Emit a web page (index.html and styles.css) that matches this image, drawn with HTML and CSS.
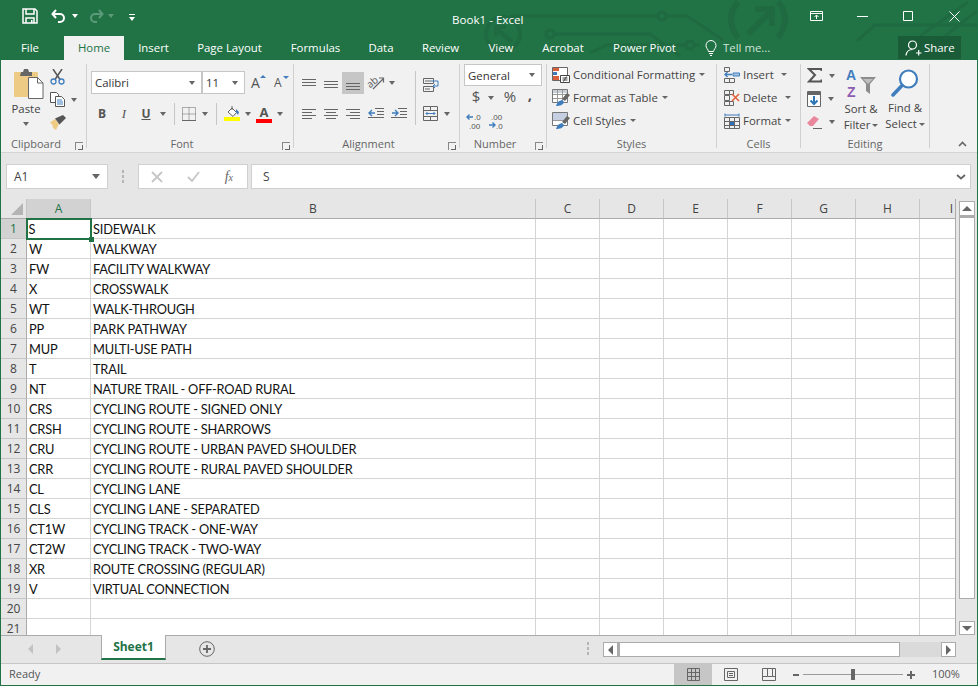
FILE: index.html
```html
<!DOCTYPE html>
<html lang="en">
<head>
<meta charset="utf-8">
<title>Book1 - Excel</title>
<link rel="stylesheet" href="styles.css">
</head>
<body>
<div class="window">
  <header class="titlebar">
    <svg class="circuit" width="978" height="60" viewBox="0 0 978 60" fill="none">
      <g stroke="#1f6a40" stroke-width="3">
        <path d="M510 16H658M666 16H687L723 40"/><circle cx="662" cy="16" r="4"/>
        <path d="M554 34H650L680 56"/><circle cx="550" cy="34" r="4"/>
        <path d="M590 53L607 45H686M694 45H700"/><circle cx="690" cy="45" r="4"/>
        <circle cx="503" cy="34" r="17" stroke-width="4"/><path d="M512 42L496 28M496 36V27H506" stroke-width="4"/>
        <path d="M738 2Q724 18 738 38M778 2Q792 18 778 38" stroke-width="6"/>
        <path d="M748 34L770 12M755 9H772V26" stroke-width="6"/>
        <path d="M857 41L875 25H978M920 36L968 2M940 40L978 10"/>
      </g>
    </svg>
    <div class="top-row">
      <div class="qat">
        <span class="qat-slot first"><svg width="16" height="16" viewBox="0 0 16 16" fill="none" stroke="#fff" stroke-width="1.5"><path d="M1 1h12l2 2v12H1z"/><path d="M4 1v5h8V1M4 15v-5h8v5"/><path d="M9 12h1.5v3H9z" fill="#fff" stroke="none"/></svg></span>
        <span class="qat-slot undo"><svg width="16" height="14" viewBox="0 0 16 14" fill="none" stroke="#fff" stroke-width="2"><path d="M5 1L1.5 5 5 9"/><path d="M2 5h7a4 4 0 0 1 0 8H7"/></svg></span>
        <span class="caret white"></span>
        <span class="qat-slot redo"><svg width="16" height="14" viewBox="0 0 16 14" fill="none" stroke="#5c9a79" stroke-width="2"><path d="M11 1l3.500 4L11 9"/><path d="M14 5H7a4 4 0 0 0 0 8h2"/></svg></span>
        <span class="caret dim"></span>
        <span class="qat-custom"><i></i><span class="caret white"></span></span>
      </div>
      <div class="doc-title">Book1 - Excel</div>
      <div class="win-btns">
        <span class="win-btn"><svg width="13" height="10" viewBox="0 0 13 10" fill="none" stroke="#fff"><path d="M.5.500h12v9H.5zM.5 2.500h12M6.500 8V4M4.500 6l2-2 2 2"/></svg></span>
        <span class="win-btn"><svg width="11" height="1" viewBox="0 0 11 1"><path d="M0 0h11v1H0z" fill="#fff"/></svg></span>
        <span class="win-btn"><svg width="10" height="10" viewBox="0 0 10 10" fill="none" stroke="#fff"><path d="M.5.500h9v9h-9z"/></svg></span>
        <span class="win-btn"><svg width="11" height="11" viewBox="0 0 11 11" fill="none" stroke="#fff"><path d="M.5.500l10 10M10.500.500l-10 10"/></svg></span>
      </div>
    </div>
    <nav class="tabs">
      <span class="tab t-file">File</span>
      <span class="tab t-home">Home</span>
      <span class="tab t-insert">Insert</span>
      <span class="tab t-layout">Page Layout</span>
      <span class="tab t-formulas">Formulas</span>
      <span class="tab t-data">Data</span>
      <span class="tab t-review">Review</span>
      <span class="tab t-view">View</span>
      <span class="tab t-acrobat">Acrobat</span>
      <span class="tab t-pivot">Power Pivot</span>
      <span class="tell">
        <svg width="12" height="16" viewBox="0 0 12 16" fill="none" stroke="#fff"><path d="M3.500 11.500C3 9 1 8 1 5.500a5 5 0 0 1 10 0C11 8 9 9 8.500 11.500zM4 13.500h4M5 15.500h2"/></svg>
        <span>Tell me...</span>
      </span>
      <span class="share">
        <svg width="17" height="16" viewBox="0 0 17 16" fill="none" stroke="#fff" stroke-width="1.200"><circle cx="7.500" cy="5" r="4"/><path d="M1 15.500c.5-4 3-6 6.500-6M11 13h5.500M13.700 10v5.500"/></svg>
        <span>Share</span>
      </span>
    </nav>
  </header>

  <section class="ribbon">
    <div class="group g-clip">
      <div class="body clip-body">
        <div class="paste">
          <svg width="30" height="31" viewBox="0 0 30 31"><rect x="0" y="4" width="24" height="25" rx="1" fill="#eecb85"/><path d="M7 4h2l1-3h4l1 3h3v4H6z" fill="#666"/><path d="M14.500 9.500h9l5.500 5.500v15.500H14.500z" fill="#fff" stroke="#666"/><path d="M23.500 9.500V15H29" fill="none" stroke="#666"/></svg>
          <span class="paste-label">Paste</span>
          <span class="caret"></span>
        </div>
        <div class="clip-tools">
          <span class="tool"><svg width="15" height="16" viewBox="0 0 15 16" fill="none"><path d="M3 0l7 10.500M12 0L5 10.500" stroke="#555" stroke-width="1.500"/><circle cx="3.500" cy="12.500" r="2.500" stroke="#3f7dbd" stroke-width="1.300"/><circle cx="11.500" cy="12.500" r="2.500" stroke="#3f7dbd" stroke-width="1.300"/></svg></span>
          <span class="tool"><svg width="15" height="15" viewBox="0 0 15 15" fill="#fff" stroke="#555"><path d="M.5.500h6l2 2v8h-8z"/><path d="M5.500 4.500h6l3 3v7h-9z"/><path d="M7 8h5M7 10h6M7 12h6" stroke="#3f7dbd"/></svg><span class="caret"></span></span>
          <span class="tool"><svg width="16" height="15" viewBox="0 0 16 15"><path d="M0 7.500L5 4l4 5-3 6-3-2-.5-3z" fill="#eecb85"/><path d="M5 3.500L9.500 9.500 16 3l-3-3z" fill="#555"/></svg></span>
        </div>
      </div>
      <div class="label">Clipboard<i class="launcher"></i></div>
    </div>

    <div class="group g-font">
      <div class="body font-body">
        <div class="rowline">
          <span class="combo font-name">Calibri<span class="caret"></span></span>
          <span class="combo font-size">11<span class="caret"></span></span>
          <span class="grow">A<i class="up"></i></span>
          <span class="shrink">A<i class="down"></i></span>
        </div>
        <div class="rowline second">
          <span class="ico w22 fmt bold">B</span>
          <span class="ico w22 fmt ital">I</span>
          <span class="ico w22 fmt under">U</span>
          <span class="ico w12"><span class="caret"></span></span>
          <span class="vsep v1"></span>
          <span class="ico w20"><svg width="14" height="14" viewBox="0 0 14 14" fill="none" stroke="#666" stroke-dasharray="1 1"><path d="M.5.500h13v13H.500zM7 .5v13M.5 7h13"/><path d="M0 13.500h14" stroke-dasharray="none"/></svg></span>
          <span class="ico w12"><span class="caret"></span></span>
          <span class="vsep v2"></span>
          <span class="ico w20"><svg width="16" height="15" viewBox="0 0 16 15"><path d="M4 6l4-4 4.500 4.500-3.500 4z" fill="#fff" stroke="#666"/><path d="M8 0v4" stroke="#666"/><path d="M12 3l3 3-1 3-2-3z" fill="#3f7dbd"/><path d="M0 11h16v4H0z" fill="#ffff00"/></svg></span>
          <span class="ico w12"><span class="caret"></span></span>
          <span class="ico w20 color-a"><span>A</span><i></i></span>
          <span class="ico w12"><span class="caret"></span></span>
        </div>
      </div>
      <div class="label">Font<i class="launcher"></i></div>
    </div>

    <div class="group g-align">
      <div class="body align-body">
        <div class="rowline">
          <span class="ico w22"><svg width="14" height="8" viewBox="0 0 14 8"><path d="M0 0h14v1H0zM0 3h14v1H0zM0 6h14v1H0z" fill="#666"/></svg></span>
          <span class="ico w22"><svg class="mid" width="14" height="8" viewBox="0 0 14 8"><path d="M0 0h14v1H0zM0 3h14v1H0zM0 6h14v1H0z" fill="#666"/></svg></span>
          <span class="ico w22 on"><svg class="low" width="14" height="8" viewBox="0 0 14 8"><path d="M0 0h14v1H0zM0 3h14v1H0zM0 6h14v1H0z" fill="#666"/></svg></span>
          <span class="ico w24"><svg class="free" width="18" height="16" viewBox="0 0 18 16"><text class="ab" x="0" y="11" transform="rotate(-40 5 8)">ab</text><path d="M6 14L16 4M12 3h4.500v4.500" fill="none" stroke="#666" stroke-width="1.200"/></svg></span>
          <span class="ico w8"><span class="caret"></span></span>
          <span class="vsep v3"></span>
          <span class="ico w16 wrap"><svg width="16" height="14" viewBox="0 0 16 14" fill="none"><path d="M.5.500h10v5h-10zM.5 8.500h10v5h-10zM2 3h6M2 11h5" stroke="#666"/><path d="M8 3h7M15 3v5h-5M12 6l-2 2 2 2" stroke="#3f7dbd"/></svg></span>
        </div>
        <div class="rowline second">
          <span class="ico w22"><svg width="14" height="10" viewBox="0 0 14 10"><path d="M0 0h14v1H0zM0 3h10v1H0zM0 6h14v1H0zM0 9h10v1H0z" fill="#666"/></svg></span>
          <span class="ico w22"><svg width="14" height="10" viewBox="0 0 14 10"><path d="M0 0h14v1H0zM2 3h10v1H2zM0 6h14v1H0zM2 9h10v1H2z" fill="#666"/></svg></span>
          <span class="ico w22"><svg width="14" height="10" viewBox="0 0 14 10"><path d="M0 0h14v1H0zM4 3h10v1H4zM0 6h14v1H0zM4 9h10v1H4z" fill="#666"/></svg></span>
          <span class="ico w24"><svg width="16" height="11" viewBox="0 0 16 11"><path d="M7 0h9v1H7zM9 3h7v1H9zM9 6h7v1H9zM0 9h16v1H0z" fill="#666"/><path d="M7 5H1M4 2L1 5l3 3" fill="none" stroke="#3f7dbd" stroke-width="1.400"/></svg></span>
          <span class="ico w22"><svg width="16" height="11" viewBox="0 0 16 11"><path d="M7 0h9v1H7zM9 3h7v1H9zM9 6h7v1H9zM0 9h16v1H0z" fill="#666"/><path d="M1 5h6M4 2l3 3-3 3" fill="none" stroke="#3f7dbd" stroke-width="1.400"/></svg></span>
          <span class="ico w15 merge"><svg width="15" height="15" viewBox="0 0 15 15" fill="none"><path d="M.5.500h14v14H.5z" stroke="#666"/><path d="M.5 4.500h14M.5 10.500h14M7.500 .5v4M7.500 10.500v4" stroke="#666"/><path d="M3 7.500h9M4.500 6L3 7.500 4.500 9M10.500 6L12 7.500 10.500 9" stroke="#3f7dbd"/></svg></span>
          <span class="ico w18"><span class="caret"></span></span>
        </div>
      </div>
      <div class="label">Alignment<i class="launcher"></i></div>
    </div>

    <div class="group g-num">
      <div class="body num-body">
        <span class="combo general">General<span class="caret"></span></span>
        <div class="num-row">
          <span class="ico w18 dollar">$</span>
          <span class="ico w12"><span class="caret"></span></span>
          <span class="ico w24 pct">%</span>
          <span class="ico w16 comma">,</span>
        </div>
        <div class="num-row dec">
          <span class="ico w22"><svg class="free" width="18" height="16" viewBox="0 0 18 16"><path d="M7 4H1M3.500 1.500L1 4l2.500 2.500" fill="none" stroke="#3f7dbd" stroke-width="1.400"/><text class="deci" x="8" y="7">.0</text><text class="deci" x="3" y="16">.00</text></svg></span>
          <span class="ico w22"><svg class="free" width="18" height="16" viewBox="0 0 18 16"><text class="deci" x="3" y="7">.00</text><path d="M1 12h6M4.500 9.500L7 12l-2.500 2.500" fill="none" stroke="#3f7dbd" stroke-width="1.400"/><text class="deci" x="8" y="16">.0</text></svg></span>
        </div>
      </div>
      <div class="label">Number<i class="launcher"></i></div>
    </div>

    <div class="group g-styles">
      <div class="body stack">
        <div class="cmd"><svg width="18" height="16" viewBox="0 0 18 16"><path d="M.5.500h15v13H.5z" fill="#fff" stroke="#666"/><path d="M1 1h6v3H1z" fill="#d9603b"/><path d="M1 5h4v3H1z" fill="#3f7dbd"/><path d="M1 9h6v4H1z" fill="#d9603b"/><path d="M8.500 8.500h9v7h-9z" fill="#fff" stroke="#444"/><path d="M10.500 11h5M10.500 13h5M14.500 9.500l-3 5" stroke="#444" fill="none"/></svg><span>Conditional Formatting</span><span class="caret"></span></div>
        <div class="cmd"><svg width="18" height="17" viewBox="0 0 18 17"><path d="M.5.500h15v13H.5z" fill="#fff" stroke="#777"/><path d="M1 1h14v3H1z" fill="#c9cfd8"/><path d="M5.500 1v12M10.500 1v12M1 5.500h14M1 9.500h14" stroke="#999"/><path d="M10 10l5-6 3 2-5 6z" fill="#666"/><path d="M4 17c1-3 2-5 6-6l2 2c-1 3-4 4-8 4z" fill="#3f7dbd"/></svg><span>Format as Table</span><span class="caret"></span></div>
        <div class="cmd"><svg width="18" height="17" viewBox="0 0 18 17"><path d="M.5.500h15v13H.5z" fill="#fff" stroke="#777"/><path d="M1 1h14v7H1z" fill="#c4d0e2"/><path d="M1 8.500h14" stroke="#999"/><path d="M10 10l5-6 3 2-5 6z" fill="#666"/><path d="M4 17c1-3 2-5 6-6l2 2c-1 3-4 4-8 4z" fill="#3f7dbd"/></svg><span>Cell Styles</span><span class="caret"></span></div>
      </div>
      <div class="label">Styles</div>
    </div>

    <div class="group g-cells">
      <div class="body stack">
        <div class="cmd"><svg width="16" height="16" viewBox="0 0 16 16" fill="none"><path d="M.5 .5h5v4h-5zM.5 11.500h5v4h-5zM5.500 11.500h5v4h-5z" stroke="#666"/><path d="M9 6h6.500v3H9z" fill="#a7c4e2" stroke="#3f7dbd"/><path d="M8 7.500H1M3.500 5L1 7.500 3.500 10" stroke="#3f7dbd" stroke-width="1.400"/></svg><span class="cmd-ins">Insert</span><span class="caret"></span></div>
        <div class="cmd"><svg width="16" height="16" viewBox="0 0 16 16" fill="none"><path d="M.5.500h5v4h-5zM5.500.500h4v4h-4zM.5 5.500h5v5h-5zM.5 11.500h5v4h-5zM5.500 11.500h4v4h-4z" stroke="#666"/><path d="M8 4l7 7M15 4l-7 7" stroke="#e2633e" stroke-width="1.600"/></svg><span class="cmd-del">Delete</span><span class="caret"></span></div>
        <div class="cmd"><svg width="16" height="16" viewBox="0 0 16 16" fill="none"><path d="M.5 4.500h15v11H.5zM5.500 4.500v11M10.500 4.500v11M.5 8.500h15M.5 12.500h15" stroke="#666"/><path d="M6 9h4v3H6z" fill="#2e6fb7"/><path d="M1 .5v3M15 .5v3M1 2h14" stroke="#3f7dbd"/></svg><span>Format</span><span class="caret"></span></div>
      </div>
      <div class="label">Cells</div>
    </div>

    <div class="group g-edit">
      <div class="body edit-body">
        <div class="edit-col">
          <div class="edit-tool"><svg width="15" height="15" viewBox="0 0 15 15" fill="none"><path d="M14.500 3V1H2l6 6-6 6.500h12.500v-2" stroke="#555" stroke-width="2"/></svg><span class="caret"></span></div>
          <div class="edit-tool"><svg width="14" height="16" viewBox="0 0 14 16"><path d="M.5.500h13v15H.5z" fill="#fff" stroke="#666"/><path d="M1 1h12v3H1z" fill="#666"/><path d="M7 5v8M3.500 9.500L7 13l3.500-3.500" fill="none" stroke="#2e75b6" stroke-width="2"/></svg><span class="caret"></span></div>
          <div class="edit-tool"><svg width="15" height="14" viewBox="0 0 15 14"><path d="M0 8l7-7 5 3-6 7H3z" fill="#e9889d"/><path d="M6 13h9v1H6z" fill="#666"/></svg><span class="caret"></span></div>
        </div>
        <div class="big sort">
          <svg class="free" width="31" height="31" viewBox="0 0 31 31"><text class="az a" x="0" y="12">A</text><text class="az z" x="1" y="29">Z</text><path d="M14 9h16l-6 7v10l-4-3v-7z" fill="#8c8c8c"/><path d="M17 11h10l-5 5z" fill="#bfbfbf"/></svg>
          <span>Sort &amp;</span>
          <span>Filter<i class="caret"></i></span>
        </div>
        <div class="big find">
          <svg width="29" height="30" viewBox="0 0 29 30" fill="none"><circle cx="17.500" cy="11" r="8.500" stroke="#3f7dbd" stroke-width="2.200" fill="#fff"/><path d="M11 17.500L2 27" stroke="#3f7dbd" stroke-width="3.500" stroke-linecap="round"/></svg>
          <span>Find &amp;</span>
          <span>Select<i class="caret"></i></span>
        </div>
      </div>
      <div class="label">Editing</div>
    </div>

    <svg class="collapse" width="9" height="6" viewBox="0 0 9 6" fill="none"><path d="M1 5l3.500-3.500L8 5" stroke="#666" stroke-width="1.600"/></svg>
  </section>

  <section class="formula">
    <div class="namebox">A1<span class="caret big-caret"></span></div>
    <div class="dots"><i></i><i></i><i></i></div>
    <div class="fx-box">
      <svg width="12" height="12" viewBox="0 0 12 12" fill="none"><path d="M1 1l10 10M11 1L1 11" stroke="#c6c6c6" stroke-width="1.800"/></svg>
      <svg width="13" height="11" viewBox="0 0 13 11" fill="none"><path d="M1 6l4 4 7-9" stroke="#c6c6c6" stroke-width="1.800"/></svg>
      <span class="fx"><em>f</em><small>x</small></span>
    </div>
    <div class="finput"><span>S</span><svg width="10" height="6" viewBox="0 0 10 6" fill="none"><path d="M1 1l4 3.500L9 1" stroke="#666" stroke-width="1.800"/></svg></div>
  </section>

  <section class="sheet-area">
    <div class="grid-wrap">
      <table class="grid">
        <colgroup><col class="c0"><col class="ca"><col class="cb"><col class="cn"><col class="cn"><col class="cn"><col class="cn"><col class="cn"><col class="cn"><col class="cn"></colgroup>
        <thead>
          <tr><th class="corner"><i></i></th><th class="sel">A</th><th>B</th><th>C</th><th>D</th><th>E</th><th>F</th><th>G</th><th>H</th><th>I</th></tr>
        </thead>
        <tbody>
          <tr><th class="sel">1</th><td class="active">S</td><td>SIDEWALK</td><td></td><td></td><td></td><td></td><td></td><td></td><td></td></tr>
          <tr><th>2</th><td>W</td><td>WALKWAY</td><td></td><td></td><td></td><td></td><td></td><td></td><td></td></tr>
          <tr><th>3</th><td>FW</td><td>FACILITY WALKWAY</td><td></td><td></td><td></td><td></td><td></td><td></td><td></td></tr>
          <tr><th>4</th><td>X</td><td>CROSSWALK</td><td></td><td></td><td></td><td></td><td></td><td></td><td></td></tr>
          <tr><th>5</th><td>WT</td><td>WALK-THROUGH</td><td></td><td></td><td></td><td></td><td></td><td></td><td></td></tr>
          <tr><th>6</th><td>PP</td><td>PARK PATHWAY</td><td></td><td></td><td></td><td></td><td></td><td></td><td></td></tr>
          <tr><th>7</th><td>MUP</td><td>MULTI-USE PATH</td><td></td><td></td><td></td><td></td><td></td><td></td><td></td></tr>
          <tr><th>8</th><td>T</td><td>TRAIL</td><td></td><td></td><td></td><td></td><td></td><td></td><td></td></tr>
          <tr><th>9</th><td>NT</td><td>NATURE TRAIL - OFF-ROAD RURAL</td><td></td><td></td><td></td><td></td><td></td><td></td><td></td></tr>
          <tr><th>10</th><td>CRS</td><td>CYCLING ROUTE - SIGNED ONLY</td><td></td><td></td><td></td><td></td><td></td><td></td><td></td></tr>
          <tr><th>11</th><td>CRSH</td><td>CYCLING ROUTE - SHARROWS</td><td></td><td></td><td></td><td></td><td></td><td></td><td></td></tr>
          <tr><th>12</th><td>CRU</td><td>CYCLING ROUTE - URBAN PAVED SHOULDER</td><td></td><td></td><td></td><td></td><td></td><td></td><td></td></tr>
          <tr><th>13</th><td>CRR</td><td>CYCLING ROUTE - RURAL PAVED SHOULDER</td><td></td><td></td><td></td><td></td><td></td><td></td><td></td></tr>
          <tr><th>14</th><td>CL</td><td>CYCLING LANE</td><td></td><td></td><td></td><td></td><td></td><td></td><td></td></tr>
          <tr><th>15</th><td>CLS</td><td>CYCLING LANE - SEPARATED</td><td></td><td></td><td></td><td></td><td></td><td></td><td></td></tr>
          <tr><th>16</th><td>CT1W</td><td>CYCLING TRACK - ONE-WAY</td><td></td><td></td><td></td><td></td><td></td><td></td><td></td></tr>
          <tr><th>17</th><td>CT2W</td><td>CYCLING TRACK - TWO-WAY</td><td></td><td></td><td></td><td></td><td></td><td></td><td></td></tr>
          <tr><th>18</th><td>XR</td><td>ROUTE CROSSING (REGULAR)</td><td></td><td></td><td></td><td></td><td></td><td></td><td></td></tr>
          <tr><th>19</th><td>V</td><td>VIRTUAL CONNECTION</td><td></td><td></td><td></td><td></td><td></td><td></td><td></td></tr>
          <tr><th>20</th><td></td><td></td><td></td><td></td><td></td><td></td><td></td><td></td><td></td></tr>
          <tr><th>21</th><td></td><td></td><td></td><td></td><td></td><td></td><td></td><td></td><td></td></tr>
        </tbody>
      </table>
    </div>
    <div class="vscroll">
      <span class="sbtn"><i class="tri-up"></i></span>
      <span class="vthumb"></span>
      <span class="sbtn low"><i class="tri-down"></i></span>
    </div>
  </section>

  <section class="tabbar">
    <div class="nav-arrows"><i class="tri-left"></i><i class="tri-right"></i></div>
    <div class="sheet-tab">Sheet1</div>
    <svg class="add" width="16" height="16" viewBox="0 0 16 16" fill="none" stroke="#666"><circle cx="8" cy="8" r="7.300"/><path d="M4 8h8M8 4v8" stroke-width="1.800"/></svg>
    <div class="dots tab-dots"><i></i><i></i><i></i></div>
    <div class="hscroll">
      <span class="hbtn"><i class="tri-left dark"></i></span>
      <span class="hthumb"></span>
      <span class="hbtn end"><i class="tri-right dark"></i></span>
    </div>
  </section>

  <footer class="status">
    <span class="ready">Ready</span>
    <span class="view on"><svg width="13" height="13" viewBox="0 0 13 13" fill="none" stroke="#666"><path d="M.5.500h12v12H.5zM4.500.5v12M8.500.5v12M.5 4.500h12M.5 8.500h12"/></svg></span>
    <span class="view"><svg width="14" height="13" viewBox="0 0 14 13" fill="none" stroke="#666"><path d="M.5.500h13v12H.5zM3.500 3.500h7v6h-7zM5 5.500h4M5 7.500h4"/></svg></span>
    <span class="view"><svg width="14" height="13" viewBox="0 0 14 13" fill="none" stroke="#666"><path d="M.5.500h13v12H.5zM5.500.5v8H.5M10.500.5v8h-5M10.500 8.500h3"/></svg></span>
    <span class="minus"></span>
    <span class="slider"><i></i></span>
    <span class="plus"></span>
    <span class="zoom">100%</span>
  </footer>
</div>
</body>
</html>
```

FILE: styles.css
```css
* { box-sizing: border-box; }
html, body { margin: 0; padding: 0; }
body { width: 978px; height: 686px; overflow: hidden; font-family: "Open Sans", "Noto Sans", sans-serif; font-size: 11.4px; color: #444; }
.window { width: 978px; height: 686px; display: flex; flex-direction: column; border: 1px solid #217346; border-top: 0; background: #e6e6e6; overflow: hidden; }
svg { display: block; flex: none; }
svg.free { overflow: visible; }
i { display: block; }

.caret { display: inline-block; width: 0; height: 0; border-left: 3.5px solid transparent; border-right: 3.5px solid transparent; border-top: 4px solid #666; flex: none; }
.caret.white { border-top-color: #fff; }
.caret.dim { border-top-color: #5c9a79; }

/* title bar */
.titlebar { position: relative; height: 60px; flex: none; background: #217346; color: #fff; }
.circuit { position: absolute; left: -1px; top: 0; }
.top-row { position: relative; height: 36px; display: flex; align-items: flex-start; }
.qat { display: flex; align-items: center; width: 180px; height: 32px; }
.qat-slot.first { margin-left: 21px; }
.qat-slot.undo { margin-left: 13px; margin-right: 5px; }
.qat-slot.redo { margin-left: 10px; margin-right: 4px; }
.qat-custom { margin-left: 15px; display: flex; flex-direction: column; align-items: center; gap: 2px; margin-top: 3px; }
.qat-custom i { width: 6px; height: 1px; background: #fff; }
.qat-custom .caret { border-left-width: 3px; border-right-width: 3px; }
.doc-title { position: absolute; left: 451px; top: 12px; font-size: 11.6px; line-height: 16px; }
.win-btns { margin-left: auto; display: flex; height: 32px; }
.win-btn { width: 46px; display: flex; align-items: center; justify-content: center; }
.tabs { position: relative; height: 24px; display: flex; font-size: 11.4px; line-height: 22px; }
.tab { text-align: center; flex: none; padding-top: 1px; }
.t-file { width: 58px; margin-right: 5px; }
.t-home { width: 60px; background: #f1f1f1; color: #217346; }
.t-insert { width: 59px; }
.t-layout { width: 93px; }
.t-formulas { width: 79px; }
.t-data { width: 52px; }
.t-review { width: 67px; }
.t-view { width: 54px; }
.t-acrobat { width: 70px; }
.t-pivot { width: 93px; }
.tell { margin-left: 14px; display: flex; align-items: center; gap: 6px; color: #cfe3d8; height: 23px; }
.share { margin-left: auto; margin-right: 16px; width: 63px; height: 23px; background: #1a5c38; display: flex; align-items: center; gap: 2px; padding-left: 7px; }

/* ribbon */
.ribbon { position: relative; height: 93px; flex: none; background: #f1f1f1; border-bottom: 1px solid #d4d4d4; display: flex; padding-top: 4px; }
.group { display: flex; flex-direction: column; height: 84px; border-right: 1px solid #d0d0d0; flex: none; }
.g-clip { width: 86px; }
.g-font { width: 207px; }
.g-align { width: 166px; }
.g-num { width: 87px; }
.g-styles { width: 170px; }
.g-cells { width: 84px; }
.g-edit { width: 129px; }
.body { height: 72px; display: flex; }
.label { position: relative; height: 12px; line-height: 16px; text-align: center; font-size: 11px; color: #666; }
.g-font .label, .g-align .label, .g-num .label { padding-right: 16px; }
.launcher { position: absolute; right: 3px; top: 6px; width: 8px; height: 8px; border-left: 1px solid #888; border-top: 1px solid #888; }
.launcher::after { content: ""; display: block; width: 4px; height: 4px; margin: 2px; border-right: 1px solid #666; border-bottom: 1px solid #666; }
.g-clip .label { text-align: left; padding-left: 10px; }

.clip-body { padding-left: 11px; gap: 10px; }
.paste { width: 28px; display: flex; flex-direction: column; align-items: center; padding-top: 4px; }
.paste svg { align-self: flex-start; margin-left: 2px; }
.paste-label { margin-top: 2px; font-size: 11.4px; line-height: 16px; margin-bottom: 5px; }
.clip-tools { display: flex; flex-direction: column; padding-top: 1px; }
.tool { height: 23px; display: flex; align-items: center; gap: 6px; }

.font-body, .align-body { flex-direction: column; padding-top: 7px; padding-left: 4px; }
.rowline { display: flex; align-items: center; height: 23px; }
.rowline.second { margin-top: 8px; }
.ico { display: flex; align-items: center; justify-content: center; flex: none; height: 22px; }
.w8 { width: 8px; } .w12 { width: 12px; } .w15 { width: 15px; } .w16 { width: 16px; } .w18 { width: 18px; } .w20 { width: 20px; } .w22 { width: 22px; } .w24 { width: 24px; }
.vsep { width: 1px; height: 22px; background: #c6c6c6; flex: none; }
.v1 { margin: 0 4px 0 5px; }
.v2 { margin: 0 5px 0 5px; }
.v3 { margin: 0 7px 0 19px; height: 54px; align-self: flex-start; }
.combo { display: flex; align-items: center; justify-content: space-between; background: #fff; border: 1px solid #c6c6c6; padding: 0 6px 0 3px; font-size: 11.4px; color: #333; flex: none; }
.font-name { width: 111px; height: 23px; }
.font-size { width: 43px; height: 23px; }
.grow, .shrink { position: relative; color: #555; flex: none; }
.grow { font-size: 14px; margin-left: 6px; width: 23px; }
.shrink { font-size: 12px; width: 16px; }
.grow i, .shrink i { position: absolute; top: 2px; left: 9px; width: 0; height: 0; border-left: 3px solid transparent; border-right: 3px solid transparent; }
.up { border-bottom: 3px solid #3f7dbd; }
.down { border-top: 3px solid #3f7dbd; }
.fmt { font-family: "Liberation Serif", serif; color: #555; font-size: 13px; }
.bold { font-family: "Open Sans", sans-serif; font-weight: 700; font-size: 12px; }
.ital { font-style: italic; font-size: 13px; }
.under { font-family: "Open Sans", sans-serif; font-weight: 700; font-size: 12px; text-decoration: underline; }
.color-a { flex-direction: column; font-weight: 700; font-size: 13px; line-height: 14px; color: #555; }
.color-a i { width: 16px; height: 4px; background: #ff0000; }
.on { background: #c6c6c6; }
.mid { margin-top: 4px; }
.low { margin-top: 8px; }
.ab { font-size: 10px; fill: #555; }
.wrap { align-self: flex-start; margin-top: 3px; }
.merge { margin-left: 13px; }

.num-body { flex-direction: column; padding-left: 4px; }
.general { width: 78px; height: 22px; }
.num-row { display: flex; align-items: center; height: 23px; padding-left: 3px; }
.num-row.dec { padding-left: 0; }
.dollar { font-size: 15px; color: #555; padding-bottom: 3px; }
.pct { font-size: 15px; color: #555; margin-left: 1px; padding-bottom: 3px; }
.comma { font-size: 15px; font-weight: 700; color: #555; padding-bottom: 8px; }
.deci { font-size: 8px; fill: #555; font-family: "Liberation Sans", sans-serif; }

.stack { flex-direction: column; padding-left: 5px; margin-top: -1px; margin-bottom: 1px; }
.cmd { height: 23px; display: flex; align-items: center; gap: 3px; font-size: 11.4px; color: #444; white-space: nowrap; }
.cmd .caret { margin-left: 1px; border-left-width: 3px; border-right-width: 3px; border-top-width: 3px; }
.g-cells .stack { padding-left: 7px; }
.cmd-ins { width: 34px; }
.cmd-del { width: 38px; }

.edit-body { padding-left: 6px; }
.edit-col { width: 31px; display: flex; flex-direction: column; }
.edit-tool { height: 23px; display: flex; align-items: center; gap: 7px; }
.big { display: flex; flex-direction: column; align-items: center; font-size: 11.4px; line-height: 16px; white-space: nowrap; padding-top: 4px; }
.big svg { margin-bottom: 2px; }
.big .caret { display: inline-block; margin-left: 2px; vertical-align: middle; border-left-width: 3px; border-right-width: 3px; border-top-width: 3px; }
.sort { width: 46px; }
.find { width: 42px; }
.az { font-family: "Liberation Sans", sans-serif; font-weight: 700; font-size: 14px; }
.az.a { fill: #3f7dbd; }
.az.z { fill: #8f5cb4; }
.collapse { margin-left: 28px; margin-top: 77px; }

/* formula bar */
.formula { height: 46px; flex: none; display: flex; align-items: flex-start; padding: 11px 6px 0 5px; background: #e6e6e6; }
.namebox, .fx-box, .finput { height: 25px; background: #fff; border: 1px solid #d0d0d0; display: flex; align-items: center; font-size: 12px; color: #444; }
.namebox { width: 102px; padding: 0 7px; justify-content: space-between; }
.big-caret { border-left-width: 4px; border-right-width: 4px; border-top-width: 5px; }
.dots { display: flex; flex-direction: column; gap: 2px; }
.dots i { width: 2px; height: 3px; background: #b5b5b5; }
.formula .dots { margin: 6px 14px 0 14px; }
.fx-box { width: 110px; padding: 0 14px 0 12px; justify-content: space-between; }
.fx { font-family: "Liberation Serif", serif; color: #666; font-size: 14px; }
.fx em { font-style: italic; }
.fx small { font-size: 10px; font-style: italic; }
.finput { margin-left: 3px; width: 720px; padding: 0 4px 0 11px; justify-content: space-between; }

/* grid */
.sheet-area { height: 437px; flex: none; display: flex; background: #e6e6e6; }
.grid-wrap { width: 955px; height: 437px; overflow: hidden; border-right: 1px solid #ababab; border-bottom: 1px solid #ababab; flex: none; }
.grid { border-collapse: separate; border-spacing: 0; table-layout: fixed; width: 983px; background: #fff; font-family: Lato, "Liberation Sans", sans-serif; font-size: 12.8px; letter-spacing: -0.2px; color: #111; }
.c0 { width: 26px; } .ca { width: 64px; } .cb { width: 445px; } .cn { width: 64px; }
.grid thead th { height: 20px; background: #e6e6e6; border-bottom: 1px solid #ababab; border-right: 1px solid #c6c6c6; font: 400 12px "Open Sans", sans-serif; letter-spacing: 0; color: #444; padding: 0; }
.grid tbody th { height: 20px; background: #e6e6e6; border-right: 1px solid #ababab; border-bottom: 1px solid #c6c6c6; font: 400 12px "Open Sans", sans-serif; letter-spacing: 0; color: #444; padding: 0; }
.grid th.sel { background: #d2d2d2; color: #217346; }
.grid td { height: 20px; padding: 1px 0 0 2px; border-right: 1px solid #d4d4d4; border-bottom: 1px solid #d4d4d4; white-space: nowrap; }
.grid td.active { padding-left: 1.500px; }
.corner { position: relative; }
.corner i { position: absolute; right: 3px; bottom: 3px; width: 0; height: 0; border-left: 12px solid transparent; border-bottom: 12px solid #b4b4b4; }
.active { position: relative; }
.active::before { content: ""; position: absolute; left: -1px; top: -1px; right: -2px; bottom: -2px; border: 2px solid #217346; }
.active::after { content: ""; position: absolute; right: -4px; bottom: -4px; width: 5px; height: 5px; background: #217346; }

.vscroll { width: 21px; display: flex; flex-direction: column; padding: 2px 2px 0 3px; flex: none; background: #e6e6e6; }
.sbtn { width: 16px; height: 15px; background: #fff; border: 1px solid #ababab; display: flex; align-items: center; justify-content: center; flex: none; }
.sbtn.low { margin-top: 22px; height: 14px; }
.vthumb { width: 16px; height: 383px; background: #fff; border: 1px solid #ababab; border-top-width: 2px; flex: none; }
.tri-up { width: 0; height: 0; border-left: 5px solid transparent; border-right: 5px solid transparent; border-bottom: 5px solid #666; }
.tri-down { width: 0; height: 0; border-left: 5px solid transparent; border-right: 5px solid transparent; border-top: 5px solid #666; }
.tri-left { width: 0; height: 0; border-top: 5px solid transparent; border-bottom: 5px solid transparent; border-right: 5px solid #c2c2c2; }
.tri-right { width: 0; height: 0; border-top: 5px solid transparent; border-bottom: 5px solid transparent; border-left: 5px solid #c2c2c2; }
.tri-left.dark { border-right-color: #666; }
.tri-right.dark { border-left-color: #666; }

/* tabs */
.tabbar { height: 28px; flex: none; display: flex; align-items: flex-start; background: #e6e6e6; border-bottom: 1px solid #c6c6c6; }
.nav-arrows { width: 100px; display: flex; gap: 23px; padding: 8px 0 0 27px; }
.sheet-tab { width: 65px; height: 25px; background: #fff; border: 1px solid #ababab; border-top: 0; border-bottom: 2px solid #217346; margin-top: -1px; font-weight: 700; font-size: 12px; color: #217346; text-align: center; line-height: 24px; }
.add { margin: 5px 0 0 33px; }
.tab-dots { margin: 6px 0 0 372px; }
.hscroll { margin: 6px 0 0 14px; width: 353px; height: 15px; display: flex; background: #dadada; }
.hbtn { width: 15px; background: #fff; border: 1px solid #ababab; display: flex; align-items: center; justify-content: center; flex: none; }
.hbtn.end { margin-left: auto; }
.hthumb { width: 282px; background: #fff; border: 1px solid #ababab; border-left-width: 2px; }

/* status */
.status { height: 21px; flex: none; background: #f1f1f1; display: flex; align-items: center; font-size: 11px; color: #555; }
.ready { padding-left: 8px; width: 673px; margin-top: -3px; }
.view { width: 38px; height: 21px; display: flex; align-items: center; justify-content: center; }
.minus { width: 6px; height: 2px; background: #666; margin-left: 5px; }
.slider { position: relative; width: 100px; height: 1px; background: #9a9a9a; margin-left: 4px; }
.slider i { position: absolute; left: 48px; top: -5px; width: 4px; height: 11px; background: #666; }
.plus { position: relative; width: 8px; height: 2px; background: #666; margin-left: 4px; }
.plus::after { content: ""; position: absolute; left: 3px; top: -3px; width: 2px; height: 8px; background: #666; }
.zoom { margin-left: 17px; margin-top: -2px; }
```
